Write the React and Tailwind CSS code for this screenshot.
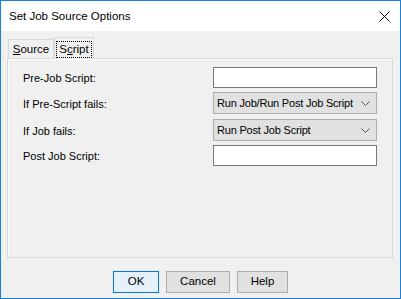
const font = { fontFamily: '"Liberation Sans", Arial, sans-serif' };

function TextBox() {
  return <div className="h-[21px] w-[164px] bg-white border border-[#7a7a7a]" />;
}

function Combo({ value }) {
  return (
    <div className="h-[22px] w-[164px] bg-[#e1e1e1] border border-[#adadad] flex items-center pl-[3px] pr-[6px] text-[11px] text-black">
      <span className="flex-1 whitespace-nowrap pt-[1px] tracking-[-0.2px]">{value}</span>
      <svg width="9" height="5" viewBox="0 0 9 5">
        <path d="M0.5 0.5 L4.5 4.5 L8.5 0.5" fill="none" stroke="#555" strokeWidth="1" />
      </svg>
    </div>
  );
}

function Row({ label, children, h }) {
  return (
    <div className={`flex items-center ${h}`}>
      <div className="w-[190px] text-[11px] text-black pt-[2px]">{label}</div>
      {children}
    </div>
  );
}

export default function App() {
  return (
    <div className="w-[401px] h-[299px] border border-[#1c7fd6] flex flex-col bg-[#f0f0f0] select-none" style={font}>
      {/* Title bar */}
      <div className="h-[30px] bg-white flex items-center pl-[8px] pr-[10px] shrink-0">
        <span className="flex-1 text-[11.5px] text-black pt-[1px]">Set Job Source Options</span>
        <svg width="11" height="11" viewBox="0 0 11 11">
          <path d="M0.5 0.5 L10.5 10.5 M10.5 0.5 L0.5 10.5" stroke="#000" strokeWidth="1" />
        </svg>
      </div>

      <div className="flex-1 px-[6px] pt-[6px]">
        {/* Tabs */}
        <div className="flex items-end h-[21px] text-[11.5px] text-black">
          <div className="h-[19px] w-[46px] ml-[1px] border border-b-0 border-[#d9d9d9] bg-[#f0f0f0] flex items-center justify-center pt-[2px]">
            <span><span className="underline">S</span>ource</span>
          </div>
          <div className="h-[22px] w-[40px] -mb-[1px] border border-b-0 border-[#d9d9d9] bg-[#f0f0f0] relative z-10 flex items-center justify-center">
            <span className="border border-dotted border-black px-[2px] leading-[15px] mt-[1px]">
              S<span className="underline">c</span>ript
            </span>
          </div>
        </div>

        {/* Panel */}
        <div className="w-[386px] h-[200px] border border-[#d9d9d9] bg-[#f0f0f0] shadow-[inset_1px_1px_0_#fff] pl-[15px] pt-[8px] flex flex-col gap-[4px]">
          <Row label="Pre-Job Script:" h="h-[21px]"><TextBox /></Row>
          <Row label="If Pre-Script fails:" h="h-[22px]"><Combo value="Run Job/Run Post Job Script" /></Row>
          <div className="h-[1px] -mt-[4px]" />
          <Row label="If Job fails:" h="h-[22px]"><Combo value="Run Post Job Script" /></Row>
          <Row label="Post Job Script:" h="h-[21px]"><TextBox /></Row>
        </div>

        {/* Buttons */}
        <div className="flex justify-center gap-[7px] mt-[13px] text-[11.5px] text-black">
          <button className="h-[22px] w-[46px] bg-[#e5f1fb] border border-[#0078d7]">OK</button>
          <button className="h-[22px] w-[64px] bg-[#e1e1e1] border border-[#adadad]">Cancel</button>
          <button className="h-[22px] w-[51px] bg-[#e1e1e1] border border-[#adadad]">Help</button>
        </div>
      </div>
    </div>
  );
}
